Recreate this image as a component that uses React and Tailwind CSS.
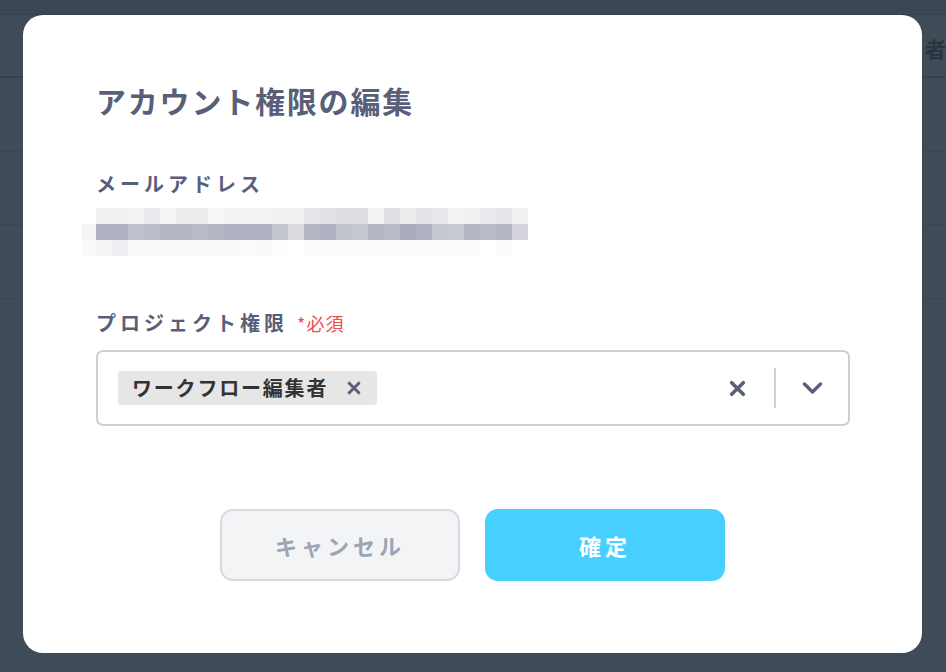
import React from 'react';

const font = { fontFamily: '"Noto Sans CJK JP", "Noto Sans", sans-serif' };

// pixelated (masked) email address
const mosaic = [
  [null, '#f1f1f4', '#f1f1f4', '#f3f3f5', '#ebebef', '#f4f4f6', '#ededf0', '#ededf0', '#f7f8fa', '#f2f2f4', '#f2f2f4', '#f2f2f4', '#f0f1f3', '#f0f1f3', '#e5e6ea', '#e1e2e7', '#dcdde3', '#dcdde3', '#f3f3f5', '#dfe0e5', '#ededf0', '#e3e4e8', '#e8e8ec', '#f2f2f4', '#f0f0f3', '#ebebef', '#e6e7eb', '#f1f1f4'],
  ['#f5f5f7', '#b1b3c2', '#b1b3c2', '#bfc1cd', '#bbbdca', '#b5b7c5', '#b5b7c5', '#b9bbc8', '#b5b7c5', '#b1b3c2', '#b1b3c2', '#b1b3c2', '#c3c5cf', '#dadbe1', '#b5b7c5', '#aeb1bf', '#c1c3cd', '#c5c7d1', '#b5b7c5', '#b9bbc8', '#a9acbb', '#aeb1bf', '#c5c7d1', '#c9cbd4', '#b5b7c5', '#b9bbc8', '#b5b7c5', '#d3d4dc'],
  ['#fafafb', '#f5f5f7', '#eeeff2', '#f9f9fb', '#f9f9fb', '#f8f9fb', '#f9f9fb', '#f9f9fb', '#f8f9fa', '#f9f9fb', '#fbfbfc', '#f9f9fb', '#fefefe', '#ffffff', '#fbfbfc', '#fbfbfc', '#fcfcfd', '#fcfcfd', '#fcfcfd', '#fcfcfd', '#fcfcfd', '#fcfcfd', '#fbfbfc', '#fafbfc', '#fbfbfc', '#ffffff', '#fcfcfd', '#ffffff'],
];

const MaskedEmail = () => (
  <div className="ml-[-14px] flex flex-col">
    {mosaic.map((row, i) => (
      <div key={i} className="flex">
        {row.map((c, j) => (
          <div
            key={j}
            className={j === 0 ? 'w-[14px] h-4' : 'w-4 h-4'}
            style={{ backgroundColor: c || 'transparent' }}
          />
        ))}
      </div>
    ))}
  </div>
);

const Backdrop = () => (
  <div className="w-full h-full bg-[#404b58] flex flex-col">
    <div className="h-[15px] bg-[#3c4753] border-b border-[#37414d]" />
    <div className="h-[63px] flex items-center justify-end pt-[6px] border-b-2 border-[#36404b]">
      <span className="w-[21px] text-[21px] leading-none font-bold text-[#2b333e]">者</span>
    </div>
    <div className="h-[74px] border-b border-[#3b4551]" />
    <div className="h-[73px] border-b border-[#3b4551]" />
    <div className="h-[74px] border-b border-[#3b4551]" />
  </div>
);

const ClearIcon = ({ className }) => (
  <svg viewBox="0 0 16 16" className={className} fill="none" stroke="currentColor" strokeLinecap="round" strokeWidth="3.4">
    <path d="M2.5 2.5l11 11M13.5 2.5l-11 11" />
  </svg>
);

const App = () => {
  return (
    <div className="relative w-[946px] h-[672px] overflow-hidden" style={font}>
      <Backdrop />

      <div className="absolute left-[23px] top-[15px] w-[899px] h-[638px] bg-white rounded-[20px] flex flex-col pl-[73px] pr-[72px] pt-[64px]">
        <h2 className="text-[30px] leading-[42px] font-bold text-[#595f78] tracking-[1.8px]">アカウント権限の編集</h2>

        <div className="mt-[49px] text-[20px] leading-[28px] font-bold text-[#595f78] tracking-[4px]">メールアドレス</div>
        <div className="mt-[10px]">
          <MaskedEmail />
        </div>

        <div className="mt-[53px] flex items-baseline">
          <span className="text-[20px] leading-[28px] font-bold text-[#595f78] tracking-[4px]">プロジェクト権限</span>
          <span className="ml-[9px] text-[18px] text-[#ef4b4b] tracking-[1px]">*必須</span>
        </div>

        <div className="mt-[13px] h-[76px] border-2 border-[#cfcfcf] rounded-[7px] flex items-center pl-[20px]">
          <div className="h-[34px] bg-[#e6e6e6] rounded-[3px] flex items-center pl-[14px] pr-[16px]">
            <span className="text-[20px] font-bold text-[#333333] tracking-[1.8px]">ワークフロー編集者</span>
            <ClearIcon className="ml-[19px] w-[14px] h-[14px] text-[#5a6078]" />
          </div>
          <div className="flex-1" />
          <ClearIcon className="w-[17px] h-[17px] text-[#5a6078]" />
          <div className="ml-[28px] w-[2px] h-[40px] bg-[#d0d0d0]" />
          <svg viewBox="0 0 20 12" className="ml-[26px] mr-[25px] w-[21px] h-[12px] text-[#5a6078]" fill="none" stroke="currentColor" strokeWidth="3.4" strokeLinecap="round" strokeLinejoin="round">
            <path d="M2 2l8 8 8-8" />
          </svg>
        </div>

        <div className="mt-[83px] flex justify-center gap-[25px] pr-px">
          <button className="w-[240px] h-[72px] rounded-[13px] border-2 border-[#d5d9e1] bg-[#f3f4f6] text-[22px] font-bold text-[#9ea3b5] tracking-[4px]">
            キャンセル
          </button>
          <button className="w-[240px] h-[72px] rounded-[13px] bg-[#46cfff] text-[22px] font-bold text-white tracking-[4px]">
            確定
          </button>
        </div>
      </div>
    </div>
  );
};

export default App;
